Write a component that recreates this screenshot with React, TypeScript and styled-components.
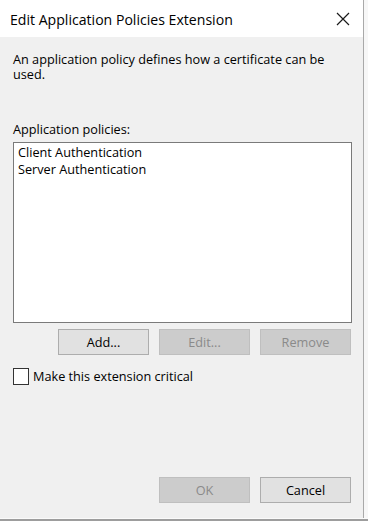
import React from "react";
import styled, { createGlobalStyle } from "styled-components";

const Global = createGlobalStyle`
  html, body { margin: 0; padding: 0; background: #f6f6f6; }
  body { font-family: "Open Sans", "Noto Sans", sans-serif; }
  * { box-sizing: border-box; }
`;

const Frame = styled.div`
  width: 368px;
  height: 521px;
  display: flex;
  flex-direction: column;
  overflow: hidden;
`;

const WindowRow = styled.div`
  display: flex;
  height: 518px;
`;

const Dialog = styled.div`
  width: 364px;
  display: flex;
  flex-direction: column;
  background: #f0f0f0;
  border-right: 1px solid #a9a9a9;
`;

const RightStrip = styled.div`
  flex: 1;
  background: #f7f7f7;
`;

const BottomBand = styled.div`
  height: 3px;
  background: #9d9d9d;
  border-top: 1px solid #fafafa;
`;

const TitleBar = styled.div`
  height: 37px;
  background: #ffffff;
  display: flex;
  align-items: center;
  justify-content: space-between;
  padding: 1px 12px 0 10px;
`;

const Title = styled.span`
  font-size: 14.1px;
  color: #000;
`;

const CloseButton = styled.div`
  width: 16px;
  height: 16px;
  display: flex;
  align-items: center;
  justify-content: center;
`;

const Body = styled.div`
  flex: 1;
  display: flex;
  flex-direction: column;
  padding: 15px 11px 15px 13px;
  font-size: 12.7px;
  color: #000;
`;

const Description = styled.p`
  margin: 0;
  line-height: 15px;
`;

const Label = styled.div`
  margin-top: 40px;
  line-height: 15px;
`;

const ListBox = styled.div`
  margin-top: 5px;
  height: 181px;
  background: #ffffff;
  border: 1px solid #7a7a7a;
  padding: 1px 4px;
  display: flex;
  flex-direction: column;
`;

const ListItem = styled.div`
  line-height: 17px;
  white-space: nowrap;
`;

const ButtonRow = styled.div<{ $top: number }>`
  display: flex;
  justify-content: flex-end;
  gap: 10px;
  margin-top: ${(p) => p.$top}px;
  padding-right: 1px;
`;

const Button = styled.button<{ $disabled?: boolean }>`
  width: 91px;
  height: 26px;
  margin: 0;
  padding: 0;
  font-family: inherit;
  font-size: 12.7px;
  background: ${(p) => (p.$disabled ? "#cccccc" : "#e1e1e1")};
  border: 1px solid ${(p) => (p.$disabled ? "#bfbfbf" : "#adadad")};
  color: ${(p) => (p.$disabled ? "#8a8a8a" : "#000000")};
  border-radius: 0;
`;

const CheckRow = styled.label`
  display: flex;
  align-items: center;
  gap: 4px;
  margin-top: 12px;
  height: 18px;
`;

const CheckBox = styled.span`
  width: 16px;
  height: 17px;
  background: #ffffff;
  border: 1px solid #333333;
`;

const Spacer = styled.div`
  flex: 1;
`;

export default function App() {
  return (
    <Frame>
      <Global />
      <WindowRow>
        <Dialog>
          <TitleBar>
            <Title>Edit Application Policies Extension</Title>
            <CloseButton>
              <svg width="14" height="14" viewBox="0 0 14 14">
                <path d="M1 1 L13 13 M13 1 L1 13" stroke="#1a1a1a" strokeWidth="1.2" fill="none" />
              </svg>
            </CloseButton>
          </TitleBar>
          <Body>
            <Description>
              An application policy defines how a certificate can be used.
            </Description>
            <Label>Application policies:</Label>
            <ListBox>
              <ListItem>Client Authentication</ListItem>
              <ListItem>Server Authentication</ListItem>
            </ListBox>
            <ButtonRow $top={6}>
              <Button>Add...</Button>
              <Button $disabled>Edit...</Button>
              <Button $disabled>Remove</Button>
            </ButtonRow>
            <CheckRow>
              <CheckBox />
              <span>Make this extension critical</span>
            </CheckRow>
            <Spacer />
            <ButtonRow $top={0}>
              <Button $disabled>OK</Button>
              <Button>Cancel</Button>
            </ButtonRow>
          </Body>
        </Dialog>
        <RightStrip />
      </WindowRow>
      <BottomBand />
    </Frame>
  );
}
